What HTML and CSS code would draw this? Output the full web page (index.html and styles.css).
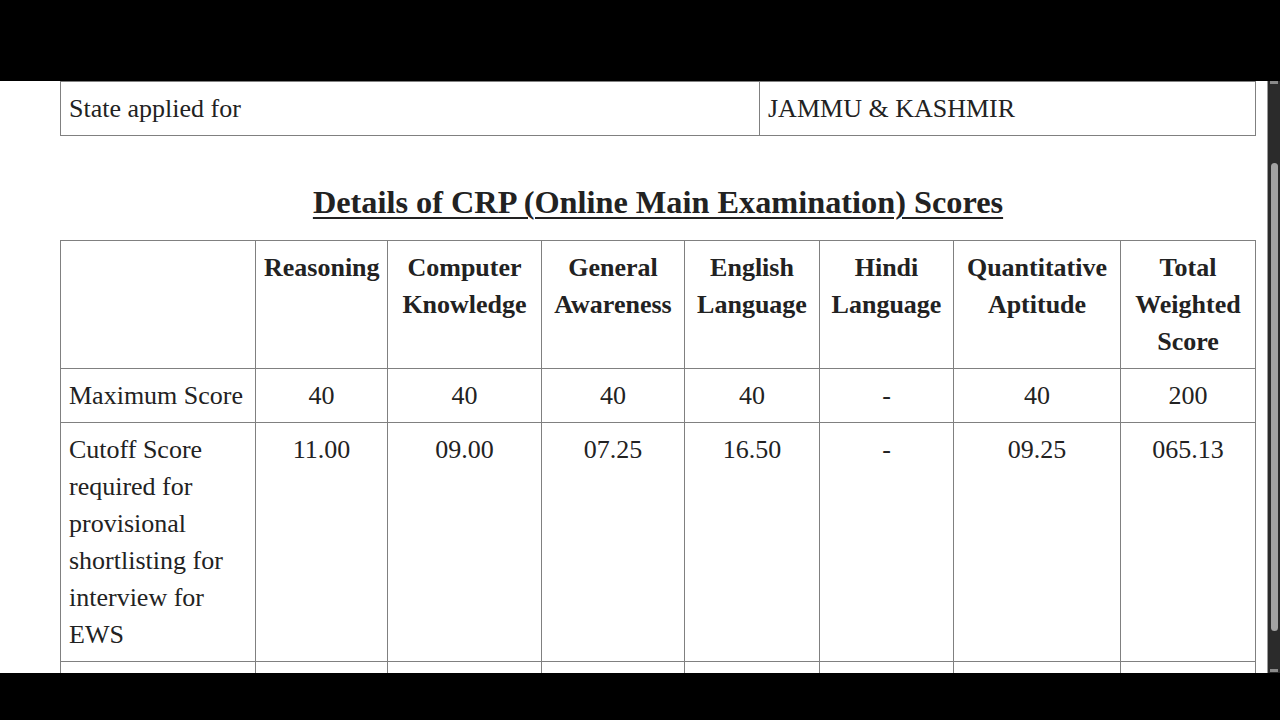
FILE: index.html
```html
<!DOCTYPE html>
<html lang="en">
<head>
<meta charset="utf-8">
<title>CRP Scores</title>
<link rel="stylesheet" href="styles.css">
</head>
<body>
<div class="topbar"></div>
<div class="viewport">
  <div class="page">
    <table class="info">
      <colgroup><col class="c-label"><col></colgroup>
      <tr><td>State applied for</td><td>JAMMU &amp; KASHMIR</td></tr>
    </table>
    <h2 class="title">Details of CRP (Online Main Examination) Scores</h2>
    <table class="scores">
      <colgroup>
        <col class="w1"><col class="w2"><col class="w3"><col class="w4"><col class="w5"><col class="w6"><col class="w7"><col>
      </colgroup>
      <tr>
        <th></th>
        <th>Reasoning</th>
        <th>Computer Knowledge</th>
        <th>General Awareness</th>
        <th>English Language</th>
        <th>Hindi Language</th>
        <th>Quantitative Aptitude</th>
        <th>Total Weighted Score</th>
      </tr>
      <tr>
        <td>Maximum Score</td><td>40</td><td>40</td><td>40</td><td>40</td><td>-</td><td>40</td><td>200</td>
      </tr>
      <tr>
        <td>Cutoff Score required for provisional shortlisting for interview for EWS</td><td>11.00</td><td>09.00</td><td>07.25</td><td>16.50</td><td>-</td><td>09.25</td><td>065.13</td>
      </tr>
      <tr class="next">
        <td></td><td></td><td></td><td></td><td></td><td></td><td></td><td></td>
      </tr>
    </table>
  </div>
  <div class="scrollbar">
    <div class="nub"></div>
    <div class="thumb"></div>
    <div class="nub"></div>
  </div>
</div>
<div class="bottombar"></div>
</body>
</html>
```
FILE: styles.css
```css
html, body {
  margin: 0;
  padding: 0;
  background: #000;
}
body {
  width: 1280px;
  height: 720px;
  display: flex;
  flex-direction: column;
  overflow: hidden;
  font-family: "Liberation Serif", "Times New Roman", serif;
  color: #222;
}
.topbar {
  height: 81px;
  flex: none;
  background: #000;
}
.bottombar {
  height: 47px;
  flex: none;
  background: #000;
}
.viewport {
  height: 592px;
  flex: none;
  display: flex;
  background: #fff;
  overflow: hidden;
}
.page {
  flex: 1;
  padding: 0 11px 0 60px;
}
table {
  border-collapse: collapse;
  table-layout: fixed;
  width: 1196px;
  font-size: 26px;
  line-height: 37px;
}
td, th {
  border: 1px solid #808080;
  padding: 8px;
  vertical-align: top;
}
.info td {
  text-align: left;
}
.c-label { width: 699px; }
.title {
  margin: 46px 0 18px;
  text-align: center;
  font-size: 32.3px;
  line-height: 40px;
  font-weight: bold;
  text-decoration: underline;
  text-decoration-thickness: 2px;
  text-underline-offset: 4px;
  width: 1196px;
}
.scores th {
  font-weight: bold;
  text-align: center;
}
.scores td {
  text-align: center;
}
.scores td:first-child {
  text-align: left;
}
.scores .next td {
  height: 37px;
}
.w1 { width: 195px; }
.w2 { width: 132px; }
.w3 { width: 154px; }
.w4 { width: 143px; }
.w5 { width: 135px; }
.w6 { width: 134px; }
.w7 { width: 167px; }
.scrollbar {
  width: 12px;
  flex: none;
  background: #2b2b2b;
  border-left: 1px solid #9a9a9a;
  display: flex;
  flex-direction: column;
  align-items: center;
}
.nub {
  width: 8px;
  height: 3px;
  background: #8a8a8a;
}
.thumb {
  width: 7px;
  height: 468px;
  margin: 79px 0 auto;
  background: #a3a3a3;
  border-radius: 4px;
}
.scrollbar .nub:last-child {
  margin-bottom: 1px;
}
```
